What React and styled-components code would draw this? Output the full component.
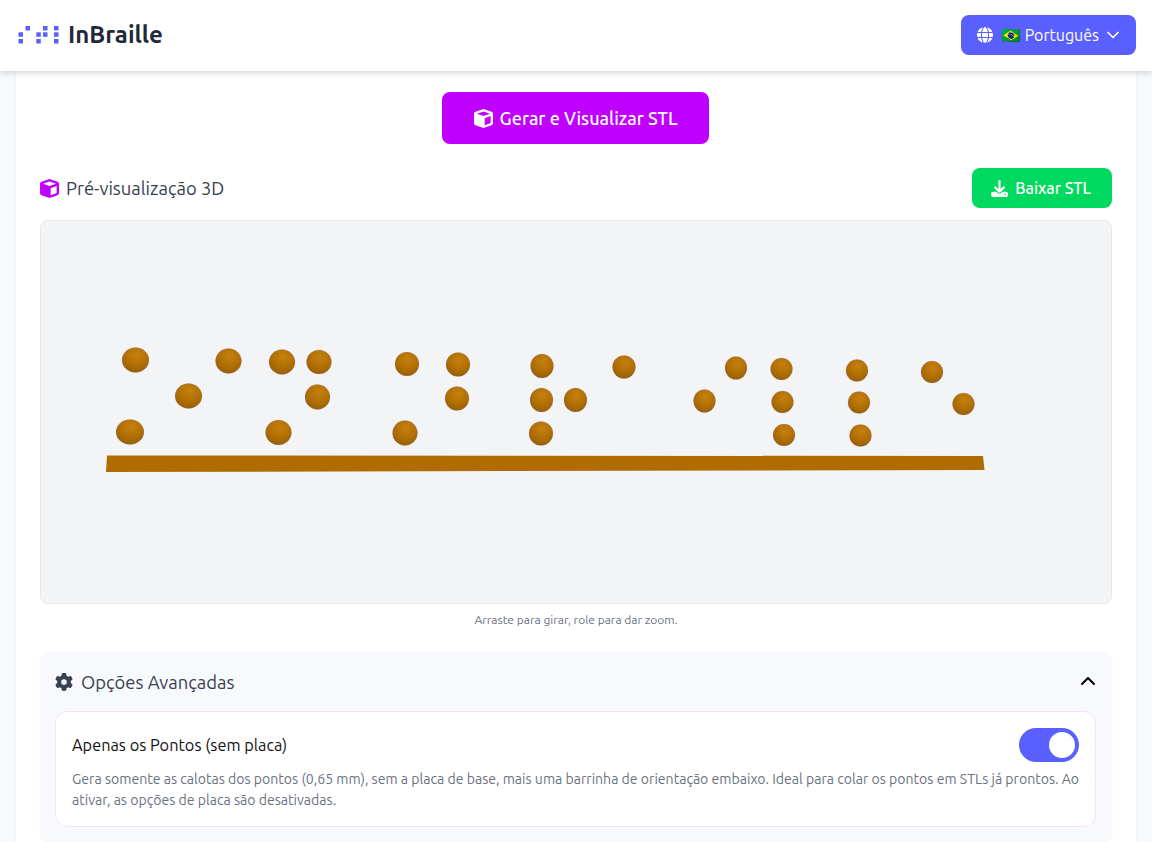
import styled, { createGlobalStyle } from "styled-components";
import { FaGlobe, FaCube, FaDownload, FaGear, FaChevronUp } from "react-icons/fa6";
import { FiChevronDown } from "react-icons/fi";

const Global = createGlobalStyle`
  * { box-sizing: border-box; }
  html, body { margin: 0; height: 842px; overflow: hidden; }
  body {
    background: #f8f9fc;
    font-family: "Ubuntu", "Noto Sans", "Open Sans", sans-serif;
    color: #1f2937;
  }
`;

const Header = styled.header`
  position: relative;
  z-index: 2;
  height: 71px;
  background: #fff;
  box-shadow: 0 2px 6px rgba(0, 0, 0, 0.16);
  display: flex;
  align-items: center;
  justify-content: space-between;
  padding: 0 16px 2px 18px;
`;

const Brand = styled.div`
  display: flex;
  align-items: center;
  gap: 9px;
  font-size: 24px;
  font-weight: 600;
  color: #1f2937;
`;

const LangButton = styled.button`
  height: 40px;
  width: 175px;
  border: 0;
  border-radius: 8px;
  background: #5a5fff;
  color: #fff;
  font: inherit;
  font-size: 16px;
  display: flex;
  align-items: center;
  gap: 8px;
  padding: 1px 0 0 16px;
`;

const LangChevron = styled(FiChevronDown)`
  margin-left: -4px;
`;

const Main = styled.main`
  width: 1120px;
  margin: 0 16px;
  height: 771px;
  background: #fff;
  box-shadow: 0 0 4px rgba(0, 0, 0, 0.05);
  padding: 21px 24px 0;
  overflow: hidden;
`;

const Center = styled.div`
  display: flex;
  justify-content: center;
  padding-right: 1px;
`;

const Button = styled.button`
  border: 0;
  color: #fff;
  font: inherit;
  font-weight: 500;
  display: flex;
  align-items: center;
  justify-content: center;
  border-radius: 8px;
  background: ${(p) => p.$bg};
  width: ${(p) => p.$w}px;
  height: ${(p) => p.$h}px;
  font-size: ${(p) => p.$size}px;
  gap: 7px;
`;

const DownloadButton = styled(Button)`
  padding: 0 2px 0 0;
`;

const PreviewHead = styled.div`
  display: flex;
  align-items: center;
  justify-content: space-between;
  margin-top: 24px;
`;

const SectionTitle = styled.h3`
  margin: 0;
  display: flex;
  align-items: center;
  gap: ${(p) => p.$gap}px;
  font-size: 18.4px;
  font-weight: 400;
  color: #374151;
`;

const Viewer = styled.div`
  margin-top: 12px;
  height: 384px;
  background: #f3f4f6;
  border: 1px solid #e5e7eb;
  border-radius: 8px;
  overflow: hidden;
`;

const Scene = styled.svg`
  display: block;
  width: 1070px;
  height: 382px;
`;

const Caption = styled.p`
  margin: 9px 0 0;
  text-align: center;
  font-size: 12px;
  line-height: 14px;
  color: #6b7280;
`;

const Advanced = styled.section`
  margin-top: 25px;
  background: #f8f9fc;
  border-radius: 8px;
  padding: 17px 16px 16px 15px;
`;

const AdvancedHead = styled.div`
  display: flex;
  align-items: center;
  justify-content: space-between;
  height: 26px;
  margin-bottom: 16px;
`;

const OptionCard = styled.div`
  background: #fff;
  border: 1px solid #f3e2ff;
  border-radius: 12px;
  padding: 16px;
  height: 116px;
`;

const OptionHead = styled.div`
  display: flex;
  align-items: center;
  justify-content: space-between;
`;

const OptionTitle = styled.span`
  font-size: 16.32px;
  color: #111;
`;

const Toggle = styled.div`
  width: 60px;
  height: 34px;
  border-radius: 17px;
  background: #5a5fff;
  padding: 4px;
  display: flex;
  justify-content: ${(p) => (p.$on ? "flex-end" : "flex-start")};
`;

const Knob = styled.span`
  width: 26px;
  height: 26px;
  border-radius: 50%;
  background: #fff;
`;

const OptionText = styled.p`
  margin: 7px -3px 0 0;
  font-size: 14.08px;
  line-height: 21px;
  color: #6b7280;
`;

const dots = [
  [135.5, 360, 13.5, 12.5], [228.5, 361, 13, 12.5], [282, 362, 13, 12.5], [319, 362, 12.5, 12],
  [407, 364, 12, 12], [458, 364.5, 12, 12], [542, 366, 11.5, 12], [624, 367, 11.5, 11.5],
  [736, 368, 11, 11.5], [781.5, 369, 11, 11], [857, 370.5, 11, 11], [932, 372, 11, 11],
  [188.5, 396, 13.5, 12.5], [317.5, 397, 12.5, 12.5], [457, 398.5, 12, 12], [541.5, 400, 11.5, 12],
  [575.5, 400, 11.5, 12], [704.5, 401, 11, 11.5], [782.5, 402, 11, 11], [859, 402.5, 11, 11],
  [963.5, 404, 11, 11], [130, 432, 14, 12.5], [278.5, 432.5, 13, 12.5], [405, 433, 12.5, 12.5],
  [541, 433.5, 12, 12], [784, 435, 11, 11], [860.5, 435.5, 11, 11],
];

const logoDots = [
  [25.5, 24], [43, 24], [54, 24],
  [18.5, 30.3], [36.3, 30.3], [43, 30.3], [54, 30.3],
  [18.5, 37], [36.3, 37], [54, 37],
];

function Logo() {
  return (
    <svg width="41" height="18" viewBox="18 24 41 18" fill="#5a5fff">
      {logoDots.map(([x, y]) => (
        <rect key={`${x}-${y}`} x={x} y={y} width="4.5" height="4.5" />
      ))}
    </svg>
  );
}

function BrailleScene() {
  return (
    <Scene viewBox="41 221 1070 382">
      <defs>
        <radialGradient id="ball" cx="0.55" cy="0.3" r="0.8">
          <stop offset="0" stopColor="#c4800f" />
          <stop offset="0.45" stopColor="#b57204" />
          <stop offset="1" stopColor="#8f5a02" />
        </radialGradient>
      </defs>
      <polygon points="107,455.5 983,456 984.5,470 106,472" fill="#b06c00" />
      {dots.map(([cx, cy, rx, ry]) => (
        <ellipse
          key={`${cx}-${cy}`}
          cx={cx}
          cy={cy}
          rx={rx}
          ry={ry}
          fill="url(#ball)"
          stroke="#8a70d0"
          strokeOpacity="0.35"
          strokeWidth="0.6"
        />
      ))}
    </Scene>
  );
}

export default function App() {
  return (
    <>
      <Global />
      <Header>
        <Brand>
          <Logo />
          InBraille
        </Brand>
        <LangButton>
          <FaGlobe size={16} />
          🇧🇷 Português
          <LangChevron size={20} />
        </LangButton>
      </Header>
      <Main>
        <Center>
          <Button $bg="#c000ff" $w={267} $h={52} $size={18}>
            <FaCube size={19} />
            Gerar e Visualizar STL
          </Button>
        </Center>
        <PreviewHead>
          <SectionTitle $gap={7}>
            <FaCube size={19} color="#c000ff" />
            Pré-visualização 3D
          </SectionTitle>
          <DownloadButton $bg="#00d95f" $w={140} $h={40} $size={16}>
            <FaDownload size={17} />
            Baixar STL
          </DownloadButton>
        </PreviewHead>
        <Viewer>
          <BrailleScene />
        </Viewer>
        <Caption>Arraste para girar, role para dar zoom.</Caption>
        <Advanced>
          <AdvancedHead>
            <SectionTitle $gap={8}>
              <FaGear size={18} />
              Opções Avançadas
            </SectionTitle>
            <FaChevronUp size={16} color="#000" />
          </AdvancedHead>
          <OptionCard>
            <OptionHead>
              <OptionTitle>Apenas os Pontos (sem placa)</OptionTitle>
              <Toggle $on>
                <Knob />
              </Toggle>
            </OptionHead>
            <OptionText>
              Gera somente as calotas dos pontos (0,65 mm), sem a placa de base, mais uma barrinha de orientação embaixo. Ideal para colar os pontos em STLs já prontos. Ao ativar, as opções de placa são desativadas.
            </OptionText>
          </OptionCard>
        </Advanced>
      </Main>
    </>
  );
}
